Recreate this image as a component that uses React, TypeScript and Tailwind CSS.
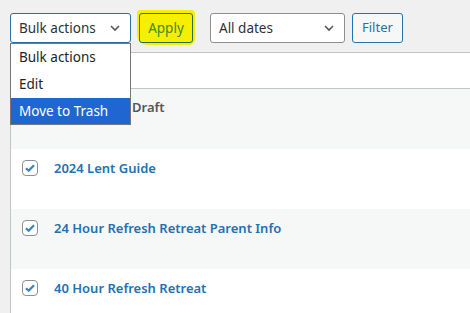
import React from 'react';

const posts = [
  { id: 1, title: '2024 Lent Guide' },
  { id: 2, title: '24 Hour Refresh Retreat Parent Info' },
  { id: 3, title: '40 Hour Refresh Retreat' },
];

function Chevron() {
  return (
    <svg width="12" height="12" viewBox="0 0 12 12" fill="none">
      <path d="M2 4l4 4 4-4" stroke="#50575e" strokeWidth="1.6" />
    </svg>
  );
}

function CheckBox() {
  return (
    <div className="w-4 h-4 rounded-[4px] border border-[#8c8f94] bg-white flex items-center justify-center shrink-0">
      <svg width="12" height="12" viewBox="0 0 12 12" fill="none">
        <path d="M2 6.2l2.7 2.6L10 3.2" stroke="#3582c4" strokeWidth="2.2" />
      </svg>
    </div>
  );
}

export default function App() {
  return (
    <div className="w-[470px] h-[313px] overflow-hidden bg-[#f0f0f1] pl-[10px] font-['Noto_Sans',sans-serif] text-[13px] text-[#2c3338]">
      {/* Toolbar */}
      <div className="relative flex items-center pt-[13px] h-[52px] pb-[9px]">
        <div className="relative">
          <div className="w-[121px] h-[30px] rounded-[3px] border border-[#2271b1] bg-white flex items-center justify-between pl-2 pr-[9px] text-[13.5px]">
            <span>Bulk actions</span>
            <Chevron />
          </div>
          {/* Open select list */}
          <div className="absolute left-0 top-[30px] z-10 w-[121px] bg-white border border-[#767676] text-[#1d2327] text-[13.5px]">
            <div className="h-[27px] flex items-center pl-2">Bulk actions</div>
            <div className="h-[27px] flex items-center pl-2">Edit</div>
            <div className="h-[26px] flex items-center pl-2 bg-[#1f66d1] text-white">Move to Trash</div>
          </div>
        </div>

        <div className="relative ml-2">
          <div className="absolute -left-[2px] -top-[3px] w-[58px] h-[35px] bg-[#f5ef00] rounded-[3px_4px_6px_10px]" />
          <div className="relative w-[54px] h-[30px] rounded-[3px] border border-[#2a6e4c] flex items-center justify-center text-[#3f8a2a] text-[13.5px]">
            Apply
          </div>
        </div>

        <div className="ml-[17px] w-[135px] h-[30px] rounded-[3px] border border-[#8c8f94] bg-white flex items-center justify-between pl-2 pr-[9px] text-[13.5px]">
          <span>All dates</span>
          <Chevron />
        </div>

        <div className="ml-[7px] h-[30px] px-[9px] rounded-[3px] border border-[#2271b1] bg-[#f6f7f7] flex items-center text-[#2271b1]">
          Filter
        </div>
      </div>

      {/* Table */}
      <div className="border-l border-t border-[#c3c4c7] bg-white">
        <div className="h-[36px] border-b border-[#c3c4c7] bg-white" />
        <div className="h-[60px] bg-[#f6f7f7] flex items-start pt-[9px] pl-[121px]">
          <span className="font-semibold text-[#50575e]">Draft</span>
        </div>
        {posts.map((p, i) => (
          <div
            key={p.id}
            className={`h-[60px] flex items-start pt-[10px] pl-[11px] gap-[16px] ${i % 2 === 1 ? 'bg-[#f6f7f7]' : 'bg-white'}`}
          >
            <div className="pt-[1px]">
              <CheckBox />
            </div>
            <span className="font-semibold text-[#2271b1] leading-[18px]">{p.title}</span>
          </div>
        ))}
      </div>
    </div>
  );
}
